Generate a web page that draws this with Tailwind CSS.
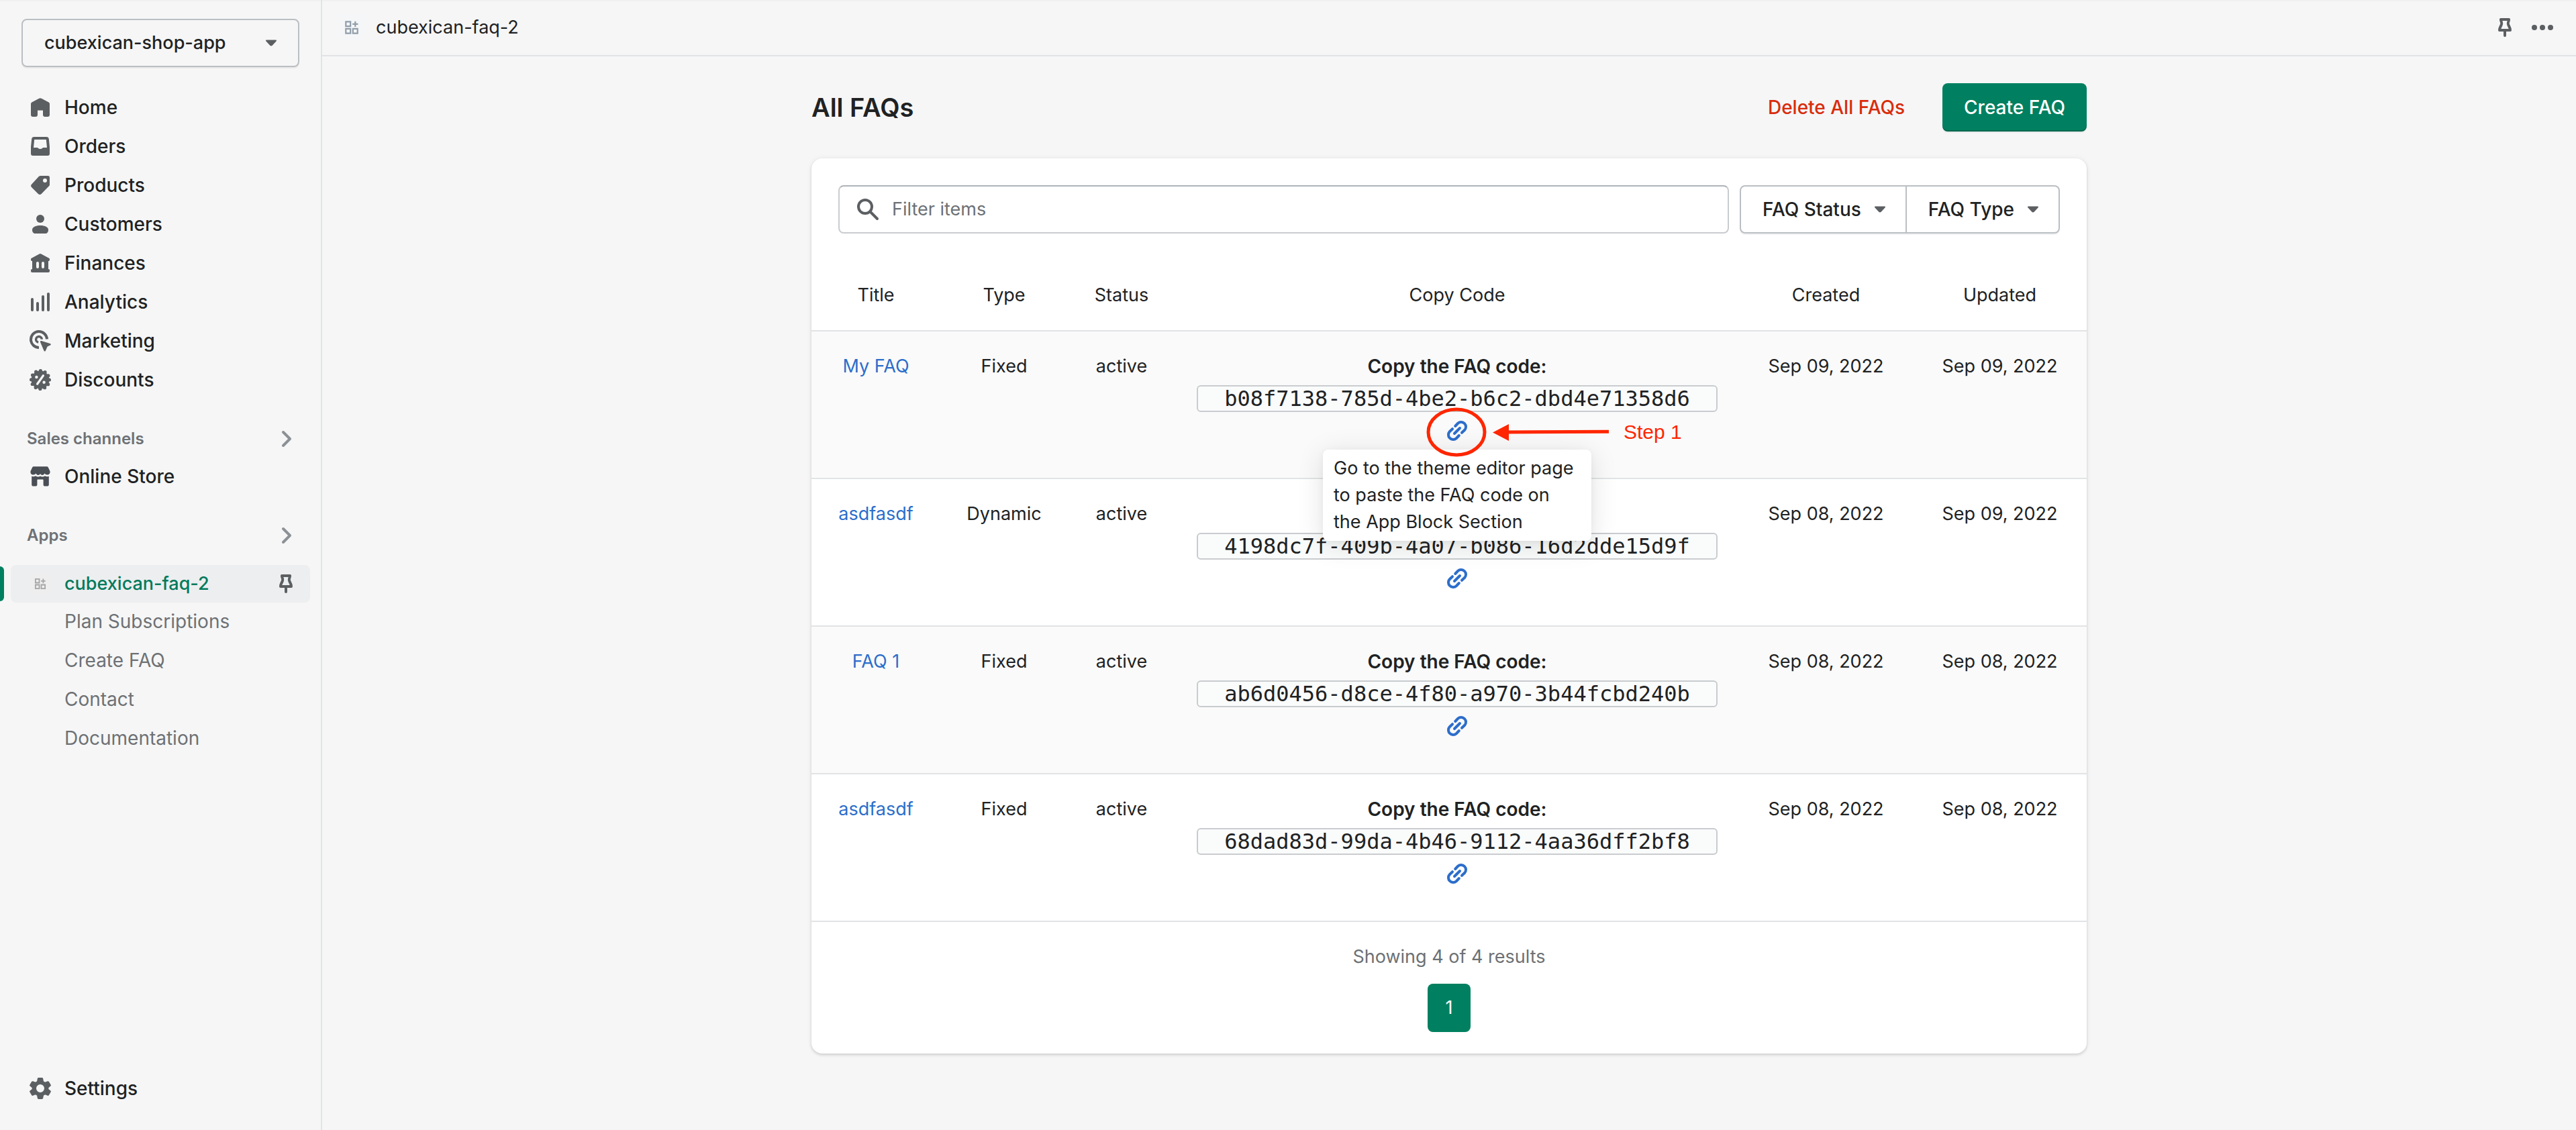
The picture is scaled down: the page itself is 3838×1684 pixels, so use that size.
<!DOCTYPE html>
<html lang="en">
<head>
<meta charset="utf-8">
<meta name="viewport" content="width=device-width, initial-scale=1">
<title>cubexican-faq-2 · All FAQs</title>
<script src="https://cdn.jsdelivr.net/npm/@tailwindcss/browser@4"></script>
</head>
<body class="bg-[#f6f6f6] font-['Inter',sans-serif] text-[27px] leading-10 text-[#202223]">

<!-- Shared icons -->
<svg class="hidden" aria-hidden="true">
  <symbol id="pin" viewBox="0 0 20 20">
    <g fill="none" stroke="currentColor" stroke-width="2" stroke-linecap="round" stroke-linejoin="round">
      <path d="M7 4h6c.3.9-.8 1.8-.6 3.1.2 1.8 1.6 2.6 1.6 4.9H6c0-2.3 1.4-3.1 1.6-4.9C7.8 5.8 6.7 4.900 7 4Z"/><path d="M10 12v4"/>
    </g>
  </symbol>
  <symbol id="chevron" viewBox="0 0 20 20">
    <path d="m8 5 5 5-5 5" fill="none" stroke="currentColor" stroke-width="2" stroke-linecap="round" stroke-linejoin="round"/>
  </symbol>
  <symbol id="caret" viewBox="0 0 20 10">
    <path d="M3 0.500h14c1 0 1.300 1 .7 1.700l-6 6.500c-.9 1-2.500 1-3.400 0l-6-6.500C1.700 1.500 2 .5 3 .5Z" fill="currentColor"/>
  </symbol>
  <symbol id="app" viewBox="0 0 24 24">
    <g fill="none" stroke="currentColor" stroke-width="2.400"><path d="M2.500 2.500h7.500v7.500H2.500zM2.500 14h7.500v7.500H2.500zM14 14h7.500v7.500H14zM17.800 2v9M13.300 6.500h9"/></g>
  </symbol>
  <symbol id="link" viewBox="0 0 16 16">
    <path d="M6.600 4.500 8.600 2.400A3.540 3.540 0 0 1 13.600 7.400L11.500 9.400M9.400 11.500 7.400 13.600A3.540 3.540 0 0 1 2.400 8.600L4.500 6.600M6 10 10 6" fill="none" stroke="currentColor" stroke-width="2" stroke-linecap="round"/>
  </symbol>
</svg>

<div class="flex min-h-screen shadow-[inset_0_2px_0_#f0f0f0]">

  <!-- Sidebar -->
  <aside class="flex w-[480px] shrink-0 flex-col border-r-2 border-[#e1e3e5] pt-7 pb-[34px] text-[28px] font-medium">
    <button type="button" aria-haspopup="true" class="mx-8 flex h-18 items-center justify-between rounded-lg border-2 border-[#babfc3] pl-8 pr-[30px] text-[27px] shadow-[0_2px_0_rgba(0,0,0,0.05)]">
      cubexican-shop-app
      <svg class="h-[10px] w-5 text-[#5c5f62]" aria-hidden="true"><use href="#caret"/></svg>
    </button>

    <nav class="mt-8" aria-label="Main">
      <ul class="flex flex-col gap-0.5">
        <li><a href="#" class="flex h-14 items-center gap-4 pl-10">
          <svg class="size-10 fill-[#5c5f62]" viewBox="0 0 20 20" aria-hidden="true"><path d="M9.060 3.400a2 2 0 0 1 1.880 0l5.400 2.900A1.300 1.300 0 0 1 17 7.450V15.500A1.500 1.500 0 0 1 15.500 17h-2A1.500 1.500 0 0 1 12 15.500V12.300H8v3.200A1.500 1.500 0 0 1 6.500 17h-2A1.500 1.500 0 0 1 3 15.500V7.450A1.300 1.300 0 0 1 3.660 6.300Z"/></svg>Home</a></li>
        <li><a href="#" class="flex h-14 items-center gap-4 pl-10">
          <svg class="size-10 fill-[#5c5f62]" viewBox="0 0 20 20" aria-hidden="true"><path fill-rule="evenodd" d="M5.300 3h9.400c.9 0 1.600.6 1.700 1.500L17 10.500v5A1.500 1.500 0 0 1 15.500 17h-11A1.500 1.500 0 0 1 3 15.500v-5l.6-6C3.700 3.600 4.400 3 5.300 3ZM5.600 5 5 11h2.500c.5 0 .7.200 1 .5.9.7 2.100.7 3 0 .3-.3.500-.5 1-.5H15l-.6-6Z"/></svg>Orders</a></li>
        <li><a href="#" class="flex h-14 items-center gap-4 pl-10">
          <svg class="size-10 fill-[#5c5f62]" viewBox="0 0 20 20" aria-hidden="true"><path fill-rule="evenodd" d="M10.200 3h5.600A1.200 1.200 0 0 1 17 4.200v5.300c0 .5-.2 1-.6 1.300l-5.600 5.700c-.7.7-1.600.7-2.300 0L3.500 11.500c-.6-.6-.6-1.500 0-2.100L8.900 3.500c.4-.3.8-.5 1.300-.5ZM13.500 5a1.500 1.500 0 1 0 0 3 1.500 1.500 0 0 0 0-3Z"/></svg>Products</a></li>
        <li><a href="#" class="flex h-14 items-center gap-4 pl-10">
          <svg class="size-10 fill-[#5c5f62]" viewBox="0 0 20 20" aria-hidden="true"><circle cx="10" cy="6" r="3"/><path d="M4 14.200C4 12.300 6.500 11 10 11s6 1.300 6 3.200c0 1.700-.9 2.800-2.300 2.800H6.300C4.900 17 4 15.900 4 14.200Z"/></svg>Customers</a></li>
        <li><a href="#" class="flex h-14 items-center gap-4 pl-10">
          <svg class="size-10 fill-[#5c5f62]" viewBox="0 0 20 20" aria-hidden="true"><path fill-rule="evenodd" d="M9.300 3.200a1.500 1.500 0 0 1 1.400 0l5.600 3c.4.200.7.600.7 1v.4c0 .5-.4.9-1 .9v6c.6 0 1 .4 1 .9v.6c0 .6-.4 1-1 1H4c-.6 0-1-.4-1-1v-.6c0-.5.4-.9 1-.9v-6c-.6 0-1-.4-1-.9v-.4c0-.4.300-.8.700-1ZM8 9a1 1 0 0 0-1 1v3a1 1 0 0 0 2 0v-3a1 1 0 0 0-1-1ZM12 9a1 1 0 0 0-1 1v3a1 1 0 0 0 2 0v-3a1 1 0 0 0-1-1Z"/></svg>Finances</a></li>
        <li><a href="#" class="flex h-14 items-center gap-4 pl-10">
          <svg class="size-10 fill-[#5c5f62]" viewBox="0 0 20 20" aria-hidden="true"><rect x="3" y="7" width="2" height="10" rx="1"/><rect x="7" y="10" width="2" height="7" rx="1"/><rect x="11" y="5" width="2" height="12" rx="1"/><rect x="15" y="3" width="2" height="14" rx="1"/></svg>Analytics</a></li>
        <li><a href="#" class="flex h-14 items-center gap-4 pl-10">
          <svg class="size-10 fill-[#5c5f62]" viewBox="0 0 20 20" aria-hidden="true"><path d="M9 15A6 6 0 1 1 15 8.700" fill="none" stroke="#5c5f62" stroke-width="2"/><path d="M8.600 11.100A2.200 2.200 0 1 1 11.200 8.800" fill="none" stroke="#5c5f62" stroke-width="1.700"/><path d="M10.900 10 17.300 12c.8.3.8 1 .1 1.300L15.300 14.300 14 17.200c-.3.800-1 .8-1.300 0L10 10.900c-.2-.6.300-1.100.9-.9Z"/></svg>Marketing</a></li>
        <li><a href="#" class="flex h-14 items-center gap-4 pl-10">
          <svg class="size-10 fill-[#5c5f62]" viewBox="0 0 20 20" aria-hidden="true"><circle cx="10" cy="10" r="6.700"/><circle cx="10" cy="10" r="6.700" fill="none" stroke="#5c5f62" stroke-width="2.600" stroke-linecap="round" stroke-dasharray="0 3.508"/><path d="m12.200 6.900-4.400 6.200" stroke="#f6f6f6" stroke-width="1.600" stroke-linecap="round"/><circle cx="7.200" cy="8" r="1.100" fill="#f6f6f6"/><circle cx="12.800" cy="11.900" r="1.100" fill="#f6f6f6"/></svg>Discounts</a></li>
      </ul>

      <a href="#" class="mt-8 flex h-14 items-center justify-between pl-10 pr-8 text-2xl font-semibold text-[#6d7175]">
        Sales channels
        <svg class="size-10 text-[#8c9196]" aria-hidden="true"><use href="#chevron"/></svg>
      </a>
      <a href="#" class="flex h-14 items-center gap-4 pl-10">
        <svg class="size-10 fill-[#4a4e55]" viewBox="0 0 20 20" aria-hidden="true"><path d="M5.200 2.600h9.600c.5 0 .9.200 1.100.7L17.200 6c.4 1.600-.6 2.800-2.100 2.800-.9 0-1.500-.5-1.800-1-.4.800-1 1.200-1.700 1.200-.8 0-1.300-.4-1.600-1-.3.600-.8 1-1.600 1-.7 0-1.300-.4-1.700-1.200-.3.500-.9 1-1.800 1C3.400 8.800 2.400 7.600 2.800 6l1.300-2.700c.2-.5.600-.7 1.100-.7Z"/><path d="M3.600 9.900c1 .4 2 .3 2.900-.3 1.100.8 2.500.9 3.500.2 1 .7 2.400.6 3.500-.2.900.6 1.900.7 2.900.3v6.200c0 .7-.5 1.200-1.200 1.200h-1.700c-.7 0-1.200-.5-1.200-1.200v-3.300c0-.3-.2-.5-.5-.5H8.200c-.3 0-.5.2-.5.500v3.300c0 .7-.5 1.200-1.200 1.200H4.800c-.7 0-1.200-.5-1.200-1.200Z"/></svg>Online Store</a>

      <a href="#" class="mt-8 flex h-14 items-center justify-between pl-10 pr-8 text-2xl font-semibold text-[#6d7175]">
        Apps
        <svg class="size-10 text-[#8c9196]" aria-hidden="true"><use href="#chevron"/></svg>
      </a>
      <div class="relative mt-4 px-4">
        <span class="absolute inset-y-0.5 left-0 w-1.5 rounded-r-md bg-[#008060]"></span>
        <div class="flex h-14 items-center justify-between rounded-lg bg-[#edeeef] pl-7 pr-4">
          <a href="#" aria-current="page" class="flex items-center gap-5 text-[27px] text-[#007a5c]">
            <span class="grid size-8 place-items-center rounded-lg bg-[#eeeeee]"><svg class="size-[18px] text-[#a6a6a6]" aria-hidden="true"><use href="#app"/></svg></span>
            cubexican-faq-2
          </a>
          <button type="button" aria-label="Unpin app"><svg class="size-10 text-[#5c5f62]" aria-hidden="true"><use href="#pin"/></svg></button>
        </div>
      </div>
      <ul class="flex flex-col gap-0.5 pl-24 font-normal text-[#6d7175]">
        <li><a href="#" class="flex h-14 items-center">Plan Subscriptions</a></li>
        <li><a href="#" class="flex h-14 items-center">Create FAQ</a></li>
        <li><a href="#" class="flex h-14 items-center">Contact</a></li>
        <li><a href="#" class="flex h-14 items-center">Documentation</a></li>
      </ul>
    </nav>

    <a href="#" class="mt-auto flex h-14 items-center gap-4 pl-10">
      <svg class="size-10 fill-[#5c5f62]" viewBox="0 0 20 20" aria-hidden="true"><path fill-rule="evenodd" d="M8.700 2h2.600c.4 0 .7.300.8.7l.3 1.700c.2.600.9 1 1.500.8l1.500-.6c.4-.1.800 0 1 .3l1.400 2.400c.2.300.2.700-.1 1L16.500 9.200c-.5.400-.5 1.200 0 1.600l1.200.9c.3.300.3.700.1 1l-1.400 2.400c-.2.300-.6.400-1 .3l-1.500-.6c-.6-.2-1.300.2-1.500.8l-.3 1.700c-.1.400-.4.7-.8.7H8.700c-.4 0-.7-.3-.8-.7l-.3-1.700c-.2-.6-.9-1-1.500-.8l-1.500.6c-.4.1-.8 0-1-.3L2.200 12.700c-.2-.3-.2-.7.1-1l1.200-.9c.5-.4.5-1.200 0-1.600L2.300 8.300c-.3-.3-.3-.7-.1-1l1.400-2.400c.2-.3.600-.4 1-.3l1.500.6c.6.200 1.300-.2 1.500-.8l.3-1.700c.1-.4.4-.7.8-.7ZM10 7a3 3 0 1 0 0 6 3 3 0 0 0 0-6Z"/></svg>Settings</a>
  </aside>

  <div class="flex min-w-0 flex-1 flex-col">
    <!-- App bar -->
    <header class="flex h-21 items-center justify-between border-b-2 border-[#e1e3e5] pl-6 pr-[30px]">
      <div class="flex items-center gap-4">
        <span class="grid size-10 place-items-center rounded-lg bg-[#f5f6f7]"><svg class="size-[22px] text-[#919eab]" aria-hidden="true"><use href="#app"/></svg></span>
        cubexican-faq-2
      </div>
      <div class="flex items-center gap-4 text-[#5c5f62]">
        <button type="button" aria-label="Pin app"><svg class="size-10" aria-hidden="true"><use href="#pin"/></svg></button>
        <button type="button" aria-label="More actions"><svg class="size-10 fill-current" viewBox="0 0 20 20" aria-hidden="true"><circle cx="4" cy="10" r="2"/><circle cx="10" cy="10" r="2"/><circle cx="16" cy="10" r="2"/></svg></button>
      </div>
    </header>

    <main class="mx-auto w-full max-w-[1900px] py-10">
      <div class="flex h-18 items-center justify-between">
        <h1 class="text-[38px] font-semibold">All FAQs</h1>
        <div class="flex items-center gap-14 text-[28px] font-medium">
          <button type="button" class="text-[#d82c0d]">Delete All FAQs</button>
          <button type="button" class="h-18 rounded-lg bg-[#008060] px-8 text-white shadow-[0_2px_0_rgba(0,0,0,0.05),inset_0_-2px_0_rgba(0,0,0,0.2)]">Create FAQ</button>
        </div>
      </div>

      <section class="mt-10 rounded-2xl bg-white shadow-[0_0_10px_rgba(23,24,24,0.05),0_2px_4px_rgba(0,0,0,0.15)]">
        <div class="flex gap-4 px-10 pt-10">
          <label class="flex h-18 flex-1 items-center gap-4 rounded-lg border-2 border-[#c9cccf] border-t-[#aeb4b9] pl-[22px]">
            <svg class="size-10 text-[#5c5f62]" viewBox="0 0 20 20" aria-hidden="true"><g fill="none" stroke="currentColor" stroke-width="2" stroke-linecap="round"><circle cx="8" cy="8" r="5"/><path d="m12 12 5 5"/></g></svg>
            <input type="text" aria-label="Filter items" placeholder="Filter items" class="min-w-0 flex-1 bg-transparent outline-none placeholder:text-[#6d7175]">
          </label>
          <div class="flex rounded-lg text-[28px] font-medium shadow-[0_2px_0_rgba(0,0,0,0.05)]">
            <button type="button" aria-haspopup="true" class="flex h-18 items-center gap-[18px] rounded-l-lg border-2 border-[#babfc3] pl-8 pr-7">FAQ Status <svg class="h-[10px] w-5 text-[#5c5f62]" aria-hidden="true"><use href="#caret"/></svg></button>
            <button type="button" aria-haspopup="true" class="flex h-18 items-center gap-[18px] rounded-r-lg border-2 border-l-0 border-[#babfc3] pl-8 pr-7">FAQ Type <svg class="h-[10px] w-5 text-[#5c5f62]" aria-hidden="true"><use href="#caret"/></svg></button>
          </div>
        </div>

        <table class="mt-10 w-full table-fixed text-center">
          <colgroup><col class="w-[192px]"><col class="w-[190px]"><col class="w-[160px]"><col><col class="w-[259px]"><col class="w-[259px]"></colgroup>
          <thead>
            <tr class="h-[105px]">
              <th scope="col" class="font-normal">Title</th><th scope="col" class="font-normal">Type</th><th scope="col" class="font-normal">Status</th><th scope="col" class="font-normal">Copy Code</th><th scope="col" class="font-normal">Created</th><th scope="col" class="font-normal">Updated</th>
            </tr>
          </thead>
          <tbody class="align-top">
            <tr class="border-t-2 border-[#e1e3e5] bg-[#fafafa]">
              <td class="pt-8"><a href="#" class="text-[#2c6ecb]">My FAQ</a></td>
              <td class="pt-8">Fixed</td>
              <td class="pt-8">active</td>
              <td class="px-8 pt-8 pb-[50px]">
                <div class="flex flex-col items-center gap-2">
                  <strong class="text-[28px] font-semibold">Copy the FAQ code:</strong>
                  <code class="flex h-10 w-full items-center justify-center rounded-md border-2 border-[#c9cccf] bg-[#fafbfb] font-['DejaVu_Sans_Mono',monospace] text-[32px] leading-9">b08f7138-785d-4be2-b6c2-dbd4e71358d6</code>
                  <div class="relative">
                    <a href="#" aria-label="Open theme editor" aria-describedby="editor-tip" class="grid size-10 place-items-center"><svg class="size-8 text-[#2c6ecb]" aria-hidden="true"><use href="#link"/></svg></a>
                    <p id="editor-tip" role="tooltip" class="absolute top-12 left-1/2 w-[400px] -translate-x-1/2 rounded-lg bg-white px-4 py-2 text-left shadow-[0_6px_40px_rgba(0,0,0,0.12),0_2px_10px_rgba(0,0,0,0.05)]">Go to the theme editor page to paste the FAQ code on the App Block Section</p>
                    <!-- Step callout: ring and arrow over the link -->
                    <div class="absolute -top-5 -left-7 flex h-20 w-max items-center gap-5 text-[#ff2600]">
                      <svg class="h-20 w-[276px]" viewBox="0 0 276 80" aria-hidden="true"><ellipse cx="47" cy="42" rx="42" ry="34" fill="none" stroke="currentColor" stroke-width="5"/><path d="M101 42.500 125 30v25Z" fill="currentColor"/><path d="M122 42 274 41.300" stroke="currentColor" stroke-width="5"/></svg>
                      <span class="pt-1 font-['Liberation_Sans',Arial,sans-serif] text-[30px]">Step 1</span>
                    </div>
                  </div>
                </div>
              </td>
              <td class="pt-8">Sep 09, 2022</td>
              <td class="pt-8">Sep 09, 2022</td>
            </tr>
            <tr class="border-t-2 border-[#e1e3e5]">
              <td class="pt-8"><a href="#" class="text-[#2c6ecb]">asdfasdf</a></td>
              <td class="pt-8">Dynamic</td>
              <td class="pt-8">active</td>
              <td class="px-8 pt-8 pb-[50px]">
                <div class="flex flex-col items-center gap-2">
                  <strong class="text-[28px] font-semibold">Copy the FAQ code:</strong>
                  <code class="flex h-10 w-full items-center justify-center rounded-md border-2 border-[#c9cccf] bg-[#fafbfb] font-['DejaVu_Sans_Mono',monospace] text-[32px] leading-9">4198dc7f-409b-4a07-b086-16d2dde15d9f</code>
                  <a href="#" aria-label="Open theme editor" class="grid size-10 place-items-center"><svg class="size-8 text-[#2c6ecb]" aria-hidden="true"><use href="#link"/></svg></a>
                </div>
              </td>
              <td class="pt-8">Sep 08, 2022</td>
              <td class="pt-8">Sep 09, 2022</td>
            </tr>
            <tr class="border-t-2 border-[#e1e3e5] bg-[#fafafa]">
              <td class="pt-8"><a href="#" class="text-[#2c6ecb]">FAQ 1</a></td>
              <td class="pt-8">Fixed</td>
              <td class="pt-8">active</td>
              <td class="px-8 pt-8 pb-[50px]">
                <div class="flex flex-col items-center gap-2">
                  <strong class="text-[28px] font-semibold">Copy the FAQ code:</strong>
                  <code class="flex h-10 w-full items-center justify-center rounded-md border-2 border-[#c9cccf] bg-[#fafbfb] font-['DejaVu_Sans_Mono',monospace] text-[32px] leading-9">ab6d0456-d8ce-4f80-a970-3b44fcbd240b</code>
                  <a href="#" aria-label="Open theme editor" class="grid size-10 place-items-center"><svg class="size-8 text-[#2c6ecb]" aria-hidden="true"><use href="#link"/></svg></a>
                </div>
              </td>
              <td class="pt-8">Sep 08, 2022</td>
              <td class="pt-8">Sep 08, 2022</td>
            </tr>
            <tr class="border-y-2 border-[#e1e3e5]">
              <td class="pt-8"><a href="#" class="text-[#2c6ecb]">asdfasdf</a></td>
              <td class="pt-8">Fixed</td>
              <td class="pt-8">active</td>
              <td class="px-8 pt-8 pb-[50px]">
                <div class="flex flex-col items-center gap-2">
                  <strong class="text-[28px] font-semibold">Copy the FAQ code:</strong>
                  <code class="flex h-10 w-full items-center justify-center rounded-md border-2 border-[#c9cccf] bg-[#fafbfb] font-['DejaVu_Sans_Mono',monospace] text-[32px] leading-9">68dad83d-99da-4b46-9112-4aa36dff2bf8</code>
                  <a href="#" aria-label="Open theme editor" class="grid size-10 place-items-center"><svg class="size-8 text-[#2c6ecb]" aria-hidden="true"><use href="#link"/></svg></a>
                </div>
              </td>
              <td class="pt-8">Sep 08, 2022</td>
              <td class="pt-8">Sep 08, 2022</td>
            </tr>
          </tbody>
        </table>

        <div class="flex flex-col items-center gap-5 py-8">
          <p class="text-[#6d7175]">Showing 4 of 4 results</p>
          <button type="button" aria-current="page" aria-label="Page 1" class="h-18 w-16 rounded-lg bg-[#008060] text-white">1</button>
        </div>
      </section>
    </main>
  </div>
</div>
</body>
</html>
